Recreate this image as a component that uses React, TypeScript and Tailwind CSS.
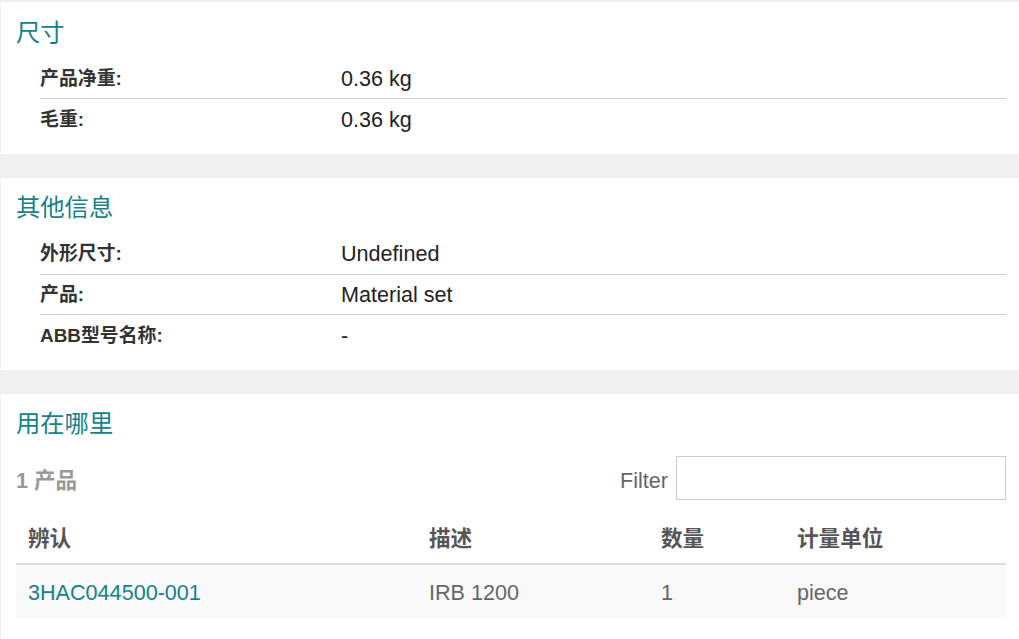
const font = { fontFamily: '"Liberation Sans", "Noto Sans CJK SC", sans-serif' };

function Row({ label, value, last }: { label: string; value: string; last?: boolean }) {
  return (
    <div
      className={`flex items-center h-[40.5px] pt-[1px] ml-6 ${last ? '' : 'border-b border-[#cccccc]'}`}
    >
      <div className="w-[301px] shrink-0 text-[18.9px] font-bold text-[#333333]">{label}</div>
      <div className="text-[21.6px] text-[#222222]">{value}</div>
    </div>
  );
}

function Panel({ title, children }: { title: string; children: React.ReactNode }) {
  return (
    <section className="bg-white ml-px pl-[15px] pr-[13px] pt-[16.5px] pb-[14px]">
      <h2 className="text-[24.3px] leading-[27px] text-[#14828c] mb-[13px]">{title}</h2>
      {children}
    </section>
  );
}

export default function App() {
  const cols = [
    { name: '辨认', w: 'w-[401px]' },
    { name: '描述', w: 'w-[232px]' },
    { name: '数量', w: 'w-[136px]' },
    { name: '计量单位', w: '' },
  ];
  const row = ['3HAC044500-001', 'IRB 1200', '1', 'piece'];

  return (
    <div className="min-h-[639px] bg-[#f0f0f0] pt-[2px] flex flex-col gap-6" style={font}>
      <Panel title="尺寸">
        <Row label="产品净重:" value="0.36 kg" />
        <Row label="毛重:" value="0.36 kg" last />
      </Panel>

      <Panel title="其他信息">
        <Row label="外形尺寸:" value="Undefined" />
        <Row label="产品:" value="Material set" />
        <Row label="ABB型号名称:" value="-" last />
      </Panel>

      <section className="bg-white ml-px pl-[15px] pr-[13px] pt-[16.5px] pb-5 flex-1">
        <h2 className="text-[24.3px] leading-[27px] text-[#14828c]">用在哪里</h2>
        <div className="flex items-center justify-between mt-[19px]">
          <span className="text-[21.6px] font-bold text-[#999999] mt-[6px]">1 产品</span>
          <label className="flex items-center gap-2">
            <span className="text-[21.6px] text-[#666666] mt-[6px]">Filter</span>
            <input className="w-[330px] h-[44px] border border-[#cccccc] outline-none px-2" />
          </label>
        </div>
        <table className="w-full mt-[11px] border-collapse">
          <thead>
            <tr className="border-b-2 border-[#dddddd]">
              {cols.map((c) => (
                <th
                  key={c.name}
                  className={`${c.w} text-left px-3 h-[53px] pt-[4px] text-[21.6px] font-bold text-[#555555]`}
                >
                  {c.name}
                </th>
              ))}
            </tr>
          </thead>
          <tbody>
            <tr className="bg-[#f9f9f9]">
              {row.map((v, i) => (
                <td
                  key={i}
                  className={`px-3 h-[54px] pt-[3px] text-[21.6px] ${i === 0 ? 'text-[#14828c]' : 'text-[#666666]'}`}
                >
                  {v}
                </td>
              ))}
            </tr>
          </tbody>
        </table>
      </section>
    </div>
  );
}
